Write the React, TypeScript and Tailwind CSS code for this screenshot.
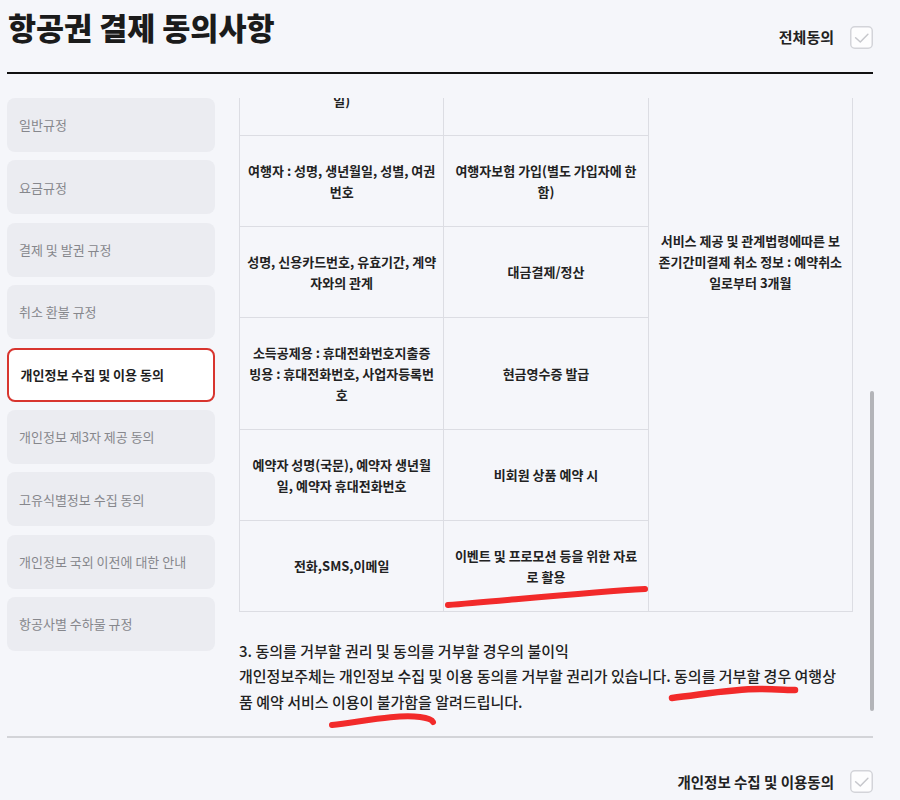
import { useLayoutEffect, useRef } from "react";

const menus = [
  "일반규정",
  "요금규정",
  "결제 및 발권 규정",
  "취소 환불 규정",
  "개인정보 수집 및 이용 동의",
  "개인정보 제3자 제공 동의",
  "고유식별정보 수집 동의",
  "개인정보 국외 이전에 대한 안내",
  "항공사별 수하물 규정",
];
const activeMenu = 4;

// 수집항목 / 이용목적 (보유기간은 한 칸으로 합쳐짐)
const rows: { items: string[]; purpose: string[] }[] = [
  {
    items: ["회원 : 아이디, 비밀번호, 성명, 휴대", "전화번호, 이메일, 생년월일, 성별, 주", "소"],
    purpose: ["회원제 서비스 이용"],
  },
  {
    items: ["탑승객 : 성명(국문/영문), 성별, 국적,", "여권번호, 여권만료일(유아는 생년월", "일)"],
    purpose: ["항공권 예약 및 발권"],
  },
  {
    items: ["여행자 : 성명, 생년월일, 성별, 여권", "번호"],
    purpose: ["여행자보험 가입(별도 가입자에 한", "함)"],
  },
  {
    items: ["성명, 신용카드번호, 유효기간, 계약", "자와의 관계"],
    purpose: ["대금결제/정산"],
  },
  {
    items: ["소득공제용 : 휴대전화번호지출증", "빙용 : 휴대전화번호, 사업자등록번", "호"],
    purpose: ["현금영수증 발급"],
  },
  {
    items: ["예약자 성명(국문), 예약자 생년월", "일, 예약자 휴대전화번호"],
    purpose: ["비회원 상품 예약 시"],
  },
  {
    items: ["전화,SMS,이메일"],
    purpose: ["이벤트 및 프로모션 등을 위한 자료", "로 활용"],
  },
];

const Lines = ({ lines }: { lines: string[] }) => (
  <>
    {lines.map((l, i) => (
      <span key={i} className="block whitespace-nowrap">
        {l}
      </span>
    ))}
  </>
);

const CheckBox = () => (
  <svg width="23" height="23" viewBox="0 0 23 23" fill="none">
    <rect x="0.75" y="0.75" width="21.5" height="21.5" rx="4" fill="#fdfdfe" stroke="#d3d4d9" strokeWidth="1.5" />
    <path d="M5.6 11.7 10.3 16 17.9 8.3" stroke="#c6c7cc" strokeWidth="1.5" strokeLinecap="round" strokeLinejoin="round" />
  </svg>
);

export default function App() {
  const scrollRef = useRef<HTMLDivElement>(null);

  useLayoutEffect(() => {
    const el = scrollRef.current;
    if (el) el.scrollTop = el.scrollHeight;
  }, []);

  const cell = "border border-[#dcdde3] px-1.5 py-6 text-center align-middle";

  return (
    <div className="relative h-[800px] w-[900px] overflow-hidden bg-[#f5f6fa] font-['Noto_Sans_CJK_KR',sans-serif] text-[#222]">
      {/* header */}
      <div className="ml-[7px] flex h-[72px] w-[866px] items-start justify-between">
        <h1 className="ml-px mt-[10px] text-[30.5px] font-black leading-[34px] text-[#1b1b1b]">
          항공권 결제 동의사항
        </h1>
        <div className="mt-[26px] flex h-[23px] items-center gap-4">
          <span className="text-[15px] font-bold text-[#222]">전체동의</span>
          <CheckBox />
        </div>
      </div>
      <div className="ml-[7px] h-[2px] w-[866px] bg-[#111]" />

      {/* body */}
      <div className="mt-6 flex gap-6 pl-[7px]">
        <ul className="flex w-[208px] flex-col gap-[8.4px]">
          {menus.map((m, i) =>
            i === activeMenu ? (
              <li
                key={m}
                className="flex h-[54px] items-center rounded-lg border-2 border-[#d8352f] bg-white pl-[11.5px] text-[13px] font-bold text-[#1f1f1f]"
              >
                {m}
              </li>
            ) : (
              <li
                key={m}
                className="flex h-[54px] items-center rounded-lg bg-[#ebecf1] pl-3 text-[13px] text-[#86878c]"
              >
                {m}
              </li>
            )
          )}
        </ul>

        <div className="relative h-[616px] w-[635px]">
          <div
            ref={scrollRef}
            className="h-full w-full overflow-x-hidden overflow-y-auto [scrollbar-width:none]"
          >
            <div className="w-[614px] text-[15px] font-medium leading-[25.5px]">
              <div className="mb-[26px]">
                <p className="whitespace-nowrap font-bold">개인정보 수집 및 이용 동의</p>
                <p className="whitespace-nowrap">회사는 항공권 예약 및 결제 서비스 제공을 위하여 아래와 같이</p>
                <p className="whitespace-nowrap">개인정보를 수집 및 이용합니다. 고객님께서는 아래 내용을</p>
                <p className="whitespace-nowrap">자세히 읽어보신 후 동의 여부를 결정하여 주시기 바랍니다.</p>
                <p className="whitespace-nowrap">수집된 개인정보는 명시된 목적 이외의 용도로 이용되지 않습니다.</p>
              </div>
              <div className="mb-[17px]">
                <p className="whitespace-nowrap">1. 수집하는 개인정보 항목</p>
                <p className="whitespace-nowrap">필수항목 : 성명, 생년월일, 성별, 휴대전화번호, 이메일</p>
                <p className="whitespace-nowrap">선택항목 : 여권정보, 마일리지 회원번호</p>
                <p className="whitespace-nowrap">2. 개인정보의 수집 및 이용목적, 보유 및 이용기간</p>
                <p className="whitespace-nowrap">회사는 수집한 개인정보를 다음의 목적을 위해 활용하며,</p>
                <p className="whitespace-nowrap">목적이 달성된 후에는 해당 정보를 지체 없이 파기합니다.</p>
              </div>

              <table className="w-[614px] table-fixed border-collapse text-[13px] font-bold leading-[21px] text-[#222]">
                <thead>
                  <tr className="bg-[#ebecf1]">
                    <th className="border border-[#dcdde3] px-2 py-3 text-center">수집항목</th>
                    <th className="border border-[#dcdde3] px-2 py-3 text-center">수집 및 이용목적</th>
                    <th className="border border-[#dcdde3] px-2 py-3 text-center">보유 및 이용기간</th>
                  </tr>
                </thead>
                <tbody>
                  {rows.map((r, i) => (
                    <tr key={i}>
                      <td className={cell}>
                        <Lines lines={r.items} />
                      </td>
                      <td className={cell}>
                        <Lines lines={r.purpose} />
                      </td>
                      {i === 0 && (
                        <td rowSpan={rows.length} className={cell}>
                          <Lines
                            lines={[
                              "서비스 제공 및 관계법령에따른 보",
                              "존기간미결제 취소 정보 : 예약취소",
                              "일로부터 3개월",
                            ]}
                          />
                        </td>
                      )}
                    </tr>
                  ))}
                </tbody>
              </table>

              <div className="mt-[26px]">
                <p className="whitespace-nowrap">3. 동의를 거부할 권리 및 동의를 거부할 경우의 불이익</p>
                <p>
                  <span className="whitespace-nowrap">
                    개인정보주체는 개인정보 수집 및 이용 동의를 거부할 권리가 있습니다. 동의를 거부할 경우 여행상
                  </span>
                  <br />
                  <span className="whitespace-nowrap">품 예약 서비스 이용이 불가함을 알려드립니다.</span>
                </p>
              </div>
            </div>
          </div>
          {/* scrollbar thumb (scrolled to the end) */}
          <div className="absolute right-0 top-[293px] h-[320px] w-[4px] rounded-full bg-[#b3b4b8]" />
        </div>
      </div>

      {/* footer */}
      <div className="ml-[7px] mt-[22px] h-[2px] w-[866px] bg-[#d3d4d8]" />
      <div className="ml-[7px] mt-[32px] flex h-[23px] w-[866px] items-center justify-end gap-4">
        <span className="text-[14.5px] font-bold text-[#222]">개인정보 수집 및 이용동의</span>
        <CheckBox />
      </div>

      {/* red pen marks over the text */}
      <svg className="pointer-events-none absolute left-0 top-0" width="900" height="800" fill="none">
        <g stroke="#f22a2a" strokeLinecap="round" strokeLinejoin="round">
          <path d="M448 605 C 500 601, 590 592, 645 589" strokeWidth="6" />
          <path d="M672 698 C 700 695, 730 689, 760 689 C 775 689, 788 690, 795 690" strokeWidth="6.5" />
          <path d="M332 725 C 360 722, 395 714, 420 717 C 428 718, 432 720, 433 722" strokeWidth="6" />
        </g>
      </svg>
    </div>
  );
}
